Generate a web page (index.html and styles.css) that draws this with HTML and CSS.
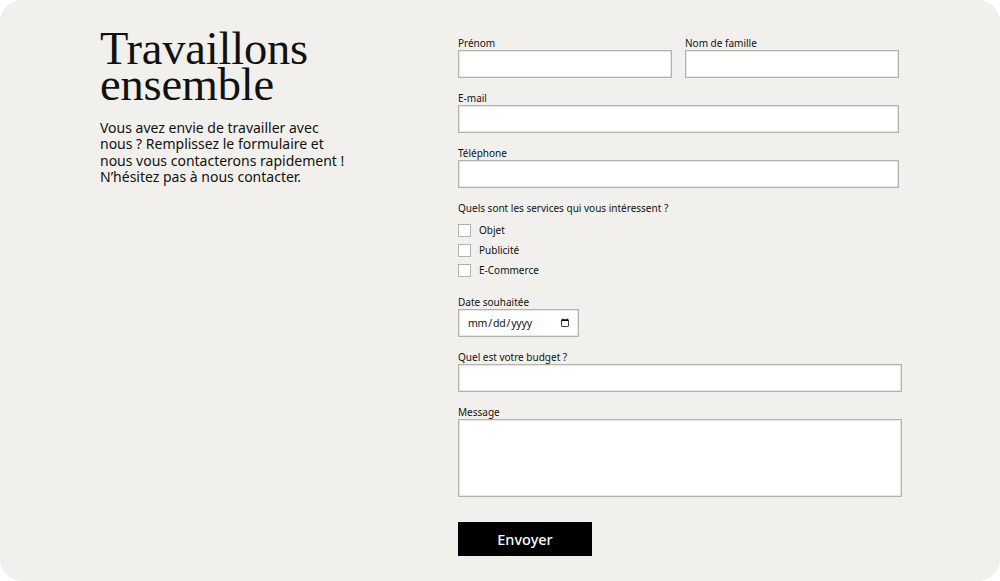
FILE: index.html
```html
<!DOCTYPE html>
<html lang="fr">
<head>
<meta charset="utf-8">
<title>Travaillons ensemble</title>
<link rel="stylesheet" href="styles.css">
</head>
<body>
<main class="page">
  <section class="intro">
    <h1 class="title"><span class="title-line">Travaillons</span><span class="title-line">ensemble</span></h1>
    <p class="lead">Vous avez envie de travailler avec nous ? Remplissez le formulaire et nous vous contacterons rapidement ! N’hésitez pas à nous contacter.</p>
  </section>
  <form class="form">
    <div class="row-two">
      <div class="field">
        <label class="label">Prénom</label>
        <input class="input" type="text">
      </div>
      <div class="field">
        <label class="label">Nom de famille</label>
        <input class="input" type="text">
      </div>
    </div>
    <div class="field">
      <label class="label">E-mail</label>
      <input class="input" type="email">
    </div>
    <div class="field">
      <label class="label">Téléphone</label>
      <input class="input" type="tel">
    </div>
    <div class="field services">
      <span class="label">Quels sont les services qui vous intéressent ?</span>
      <div class="checks">
        <label class="check"><input class="box" type="checkbox"> Objet</label>
        <label class="check"><input class="box" type="checkbox"> Publicité</label>
        <label class="check"><input class="box" type="checkbox"> E-Commerce</label>
      </div>
    </div>
    <div class="field">
      <label class="label">Date souhaitée</label>
      <input class="input date" type="date">
    </div>
    <div class="field wide">
      <label class="label">Quel est votre budget ?</label>
      <input class="input" type="text">
    </div>
    <div class="field wide">
      <label class="label">Message</label>
      <textarea class="input textarea"></textarea>
    </div>
    <button class="send" type="button">Envoyer</button>
  </form>
</main>
</body>
</html>
```

FILE: styles.css
```css
* { box-sizing: border-box; }
html, body { margin: 0; padding: 0; background: #ffffff; }
body { width: 1000px; height: 581px; overflow: hidden; }

.page {
  width: 1000px;
  height: 581px;
  background: #f1f0ec;
  border-radius: 22px;
  display: flex;
  padding: 0 0 0 100px;
  font-family: "Noto Sans", "Open Sans", sans-serif;
  color: #111;
}

.intro {
  width: 358px;
  padding-top: 31px;
}

.title {
  margin: 0;
  font-family: "Liberation Serif", "DejaVu Serif", serif;
  font-weight: 400;
  font-size: 46.5px;
  line-height: 36px;
  letter-spacing: -0.2px;
  color: #111;
}

.title-line {
  display: block;
  height: 36px;
}

.lead {
  margin: 17px 0 0;
  width: 252px;
  font-size: 14px;
  line-height: 16.3px;
  color: #111;
}

.form {
  width: 444px;
  padding-top: 37px;
  display: flex;
  flex-direction: column;
}

.row-two {
  display: grid;
  grid-template-columns: 214px 214px;
  column-gap: 13px;
}

.field {
  display: flex;
  flex-direction: column;
  width: 441px;
  margin-bottom: 14px;
}
.row-two .field { width: auto; }
.field.wide { width: 444px; }

.label {
  font-size: 10px;
  line-height: 12px;
  height: 13px;
  color: #111;
}

.input {
  display: block;
  width: 100%;
  height: 28px;
  border: 1px solid #b2b2b2;
  background: #fff;
  border-radius: 0;
  margin: 0;
  font-family: inherit;
  box-shadow: inset 0 0 0 0.5px #d0d0d0;
}

.date {
  width: 121px;
  padding: 0 6px 0 8px;
  font-size: 10.5px;
  letter-spacing: -0.2px;
  color: #111;
}

.textarea {
  height: 78px;
  resize: none;
}

.services { margin-bottom: 19px; }
.services .label { height: 22px; }

.checks {
  display: flex;
  flex-direction: column;
  gap: 7px;
}

.check {
  display: flex;
  align-items: center;
  gap: 8px;
  font-size: 10px;
  line-height: 13px;
  height: 13px;
}

.box {
  appearance: none;
  -webkit-appearance: none;
  width: 13px;
  height: 13px;
  margin: 0;
  border: 1px solid #b2b2b2;
  background: #fff;
}

.send {
  margin-top: 11px;
  width: 134px;
  height: 34px;
  background: #000;
  color: #fff;
  border: 1px solid #000;
  font-family: inherit;
  font-size: 14.5px;
  font-weight: 500;
  padding: 0;
}
```
